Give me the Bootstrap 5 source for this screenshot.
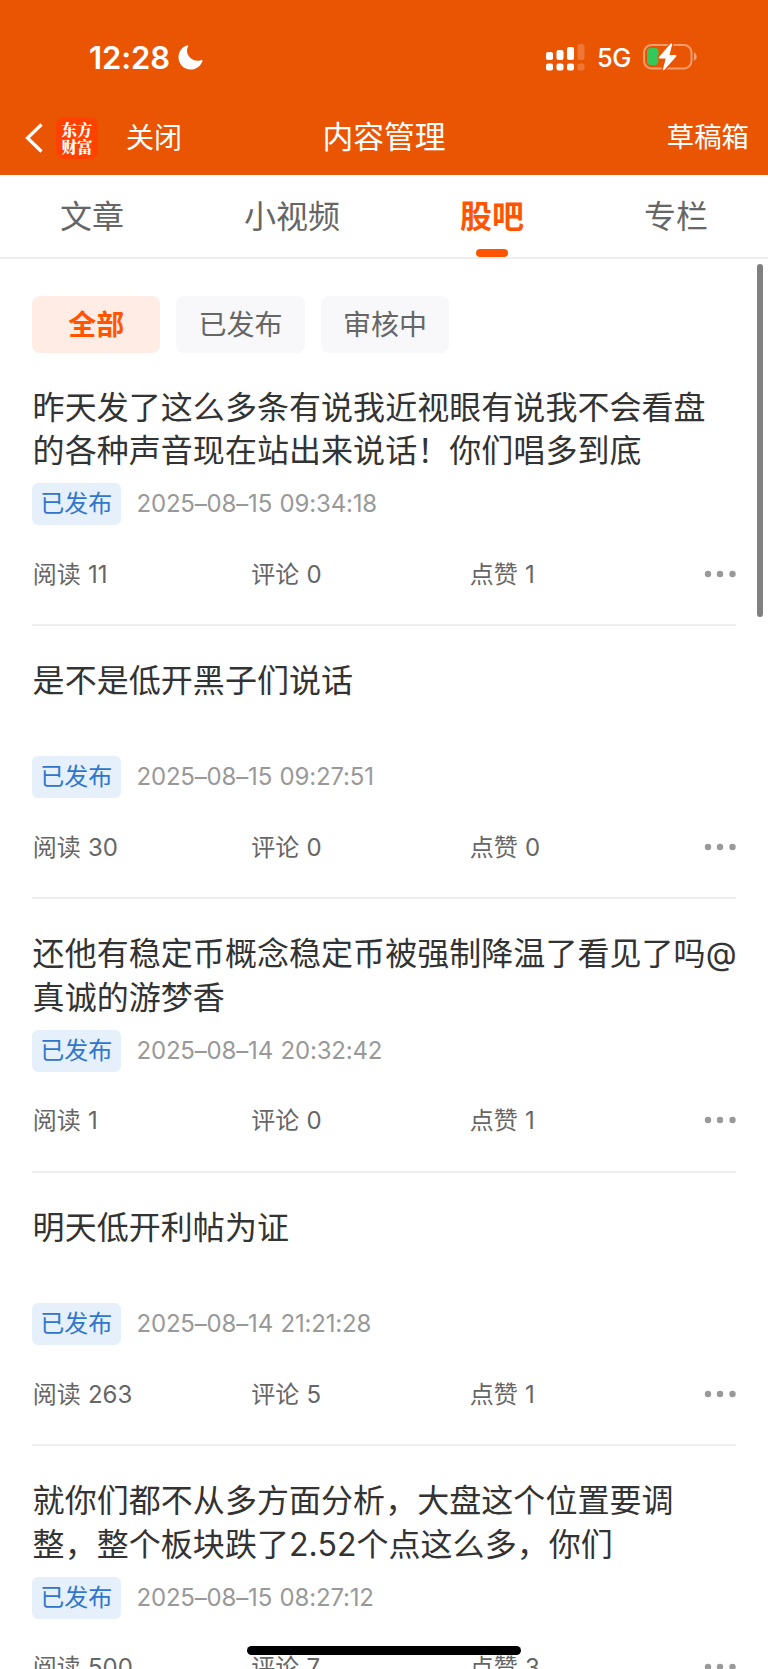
<!DOCTYPE html>
<html lang="zh-CN">
<head>
<meta charset="utf-8">
<meta name="viewport" content="width=device-width, initial-scale=1">
<title>内容管理</title>
<link href="https://cdn.jsdelivr.net/npm/bootstrap@5.3.0/dist/css/bootstrap.min.css" rel="stylesheet">
<style>
  html, body { height: 1669px; overflow: hidden; }
  body { font-family: Inter, "Noto Sans CJK SC", sans-serif; color: #333; background: #fff; }
  .screen { height: 1669px; }
  .app-head { height: 175px; background: #ea5504; color: #fff; }
  .status-bar { height: 100px; padding: 14px 70px 0 89px; }
  .clock { font-size: 31px; font-weight: 600; line-height: 1; letter-spacing: -.1px; }
  .net { font-size: 25.5px; font-weight: 500; line-height: 1; letter-spacing: -.5px; width: 46px; margin-left: 12px; padding-top: 2px; }
  .title-bar { height: 75px; padding: 0 19px 0 25px; font-size: 28px; line-height: 1; }
  .title-bar .page-title { font-size: 30.8px; top: 22px; }
  .title-bar .drafts { font-size: 27.4px; }
  .logo { width: 42px; height: 42px; border-radius: 8px; background: #ff4200; font: 900 15.5px/17px "Noto Serif CJK SC", "Noto Sans CJK SC", sans-serif; margin: 0 28px 0 13px; }
  .tabs { height: 84px; border-bottom: 2px solid #eee; font-size: 32px; color: #666; line-height: 83px; }
  .tabs a, .chip { color: inherit; text-decoration: none; }
  .tabs a.active { height: 83px; color: #ff5500; font-weight: 700; }
  .tabs a.active::after { content: ""; position: absolute; left: 50%; bottom: 1px; width: 32px; height: 8px; margin-left: -16px; border-radius: 4px; background: #ff5500; }
  .chips { gap: 16px; padding: 37px 32px 0; }
  .chip { width: 128.4px; height: 56.7px; border-radius: 8px; background: #f8f8fb; color: #666; font-size: 28px; line-height: 58px; text-align: center; }
  .chip.active { background: #ffece4; color: #ff5500; font-weight: 700; }
  .post { margin: 0 32px; height: 273.4px; padding-top: 33px; border-bottom: 2px solid #eee; }
  .post-title { height: 87.4px; font-size: 32px; line-height: 43.7px; font-weight: 400; letter-spacing: .05px; margin: 0 -4px 10px 0; padding-left: .6px; white-space: nowrap; }
  .state { width: 88.5px; height: 42px; border-radius: 6px; background: #e6f0fb; color: #2f76cc; font-size: 24px; line-height: 42px; text-align: center; }
  .when { font-size: 24px; color: #999; line-height: 42px; margin-left: 16px; letter-spacing: -.18px; word-spacing: 1px; }
  .stats { font-size: 24px; color: #666; line-height: 36px; margin-top: 31.5px; word-spacing: .5px; }
  .stats > span { width: 218.5px; padding-left: .7px; }
  .stats > svg { margin-bottom: 2px; }
  .scroll-thumb { left: 757px; top: 264px; width: 6px; height: 353px; border-radius: 3px; background: #808080; }
  .home-bar { left: 247px; top: 1646px; width: 274px; height: 9px; border-radius: 5px; background: #000; }
</style>
</head>
<body>
<div class="screen position-relative overflow-hidden">
  <header class="app-head">
    <div class="status-bar d-flex align-items-center">
      <span class="clock">12:28</span>
      <svg class="ms-2" width="25" height="25" viewBox="0 0 25 25"><path d="M9.500.300C4.500 1.600.500 6.500.500 12.300.500 19.100 5.800 24.500 12.600 24.500c5.400 0 10.200-3.500 11.900-8.600.2-.7-.3-1-.9-.8C16.500 17.600 9 12.500 9 5.300c0-1.500.4-2.800 1.100-4.100.3-.6.100-1.100-.6-.9z" fill="#fff"/></svg>
      <svg class="ms-auto" width="39" height="28" viewBox="0 0 39 28" fill="#fff">
        <rect x="0" y="9" width="7" height="8" rx="2"/><rect x="10.500" y="7" width="7" height="10" rx="2"/><rect x="21" y="4" width="7" height="13" rx="2"/><rect x="31.500" y="1" width="7" height="16" rx="2" opacity=".2"/>
        <rect x="0" y="20.500" width="7" height="7" rx="2"/><rect x="10.500" y="20.500" width="7" height="7" rx="2"/><rect x="21" y="20.500" width="7" height="7" rx="2"/><rect x="31.500" y="20.500" width="7" height="7" rx="2" opacity=".2"/>
      </svg>
      <span class="net">5G</span>
      <svg class="batt" width="55" height="28" viewBox="0 0 55 28">
        <rect x="1" y="2" width="47.500" height="23.500" rx="7.500" fill="none" stroke="#fff" stroke-opacity=".42" stroke-width="2"/>
        <path d="M51 9.500c3.500 1.200 3.500 7 0 8.200z" fill="#fff" opacity=".45"/>
        <path d="M8 5h4.500c2 0 3 1.300 3 3.200V11c0 1-1 2-1 3.200 0 .9 1 1.300 1 2.300 0 3.700-1 5.500-3.500 5.500H8c-2.600 0-4-1.600-4-4V9c0-2.400 1.400-4 4-4z" fill="#34c759"/>
        <path d="M27.500.800 16 14c-.7.900-.3 1.600.7 1.600h6L20 26c-.4 1.300.7 1.700 1.500.8L33 13.800c.8-.9.400-1.700-.7-1.700h-5.800L29 2C29.400.600 28.300 0 27.500.800z" fill="#fff" stroke="#ea5504" stroke-width="2.500" paint-order="stroke"/>
      </svg>
    </div>
    <div class="title-bar d-flex align-items-center position-relative">
      <svg width="18" height="30" viewBox="0 0 18 30"><path d="M16.500 1.500 2.500 15l14 13.500" fill="none" stroke="#fff" stroke-width="3.200"/></svg>
      <div class="logo d-flex flex-column justify-content-center text-center"><span>东方</span><span>财富</span></div>
      <span>关闭</span>
      <span class="page-title position-absolute start-50 translate-middle-x">内容管理</span>
      <span class="drafts ms-auto">草稿箱</span>
    </div>
  </header>

  <nav class="tabs d-flex justify-content-around">
    <a href="#">文章</a><a href="#">小视频</a><a href="#" class="active position-relative">股吧</a><a href="#">专栏</a>
  </nav>

  <main>
    <div class="chips d-flex">
      <a href="#" class="chip active">全部</a><a href="#" class="chip">已发布</a><a href="#" class="chip">审核中</a>
    </div>

    <article class="post">
      <h2 class="post-title">昨天发了这么多条有说我近视眼有说我不会看盘<br>的各种声音现在站出来说话！你们唱多到底</h2>
      <div class="d-flex"><span class="state">已发布</span><span class="when">2025–08–15 09:34:18</span></div>
      <div class="stats d-flex align-items-center"><span>阅读 11</span><span>评论 0</span><span>点赞 1</span><svg class="ms-auto" width="32" height="8" fill="#999"><circle cx="4" cy="4" r="3.200"/><circle cx="16" cy="4" r="3.200"/><circle cx="28.500" cy="4" r="3.200"/></svg></div>
    </article>
    <article class="post">
      <h2 class="post-title">是不是低开黑子们说话</h2>
      <div class="d-flex"><span class="state">已发布</span><span class="when">2025–08–15 09:27:51</span></div>
      <div class="stats d-flex align-items-center"><span>阅读 30</span><span>评论 0</span><span>点赞 0</span><svg class="ms-auto" width="32" height="8" fill="#999"><circle cx="4" cy="4" r="3.200"/><circle cx="16" cy="4" r="3.200"/><circle cx="28.500" cy="4" r="3.200"/></svg></div>
    </article>
    <article class="post">
      <h2 class="post-title">还他有稳定币概念稳定币被强制降温了看见了吗@<br>真诚的游梦香</h2>
      <div class="d-flex"><span class="state">已发布</span><span class="when">2025–08–14 20:32:42</span></div>
      <div class="stats d-flex align-items-center"><span>阅读 1</span><span>评论 0</span><span>点赞 1</span><svg class="ms-auto" width="32" height="8" fill="#999"><circle cx="4" cy="4" r="3.200"/><circle cx="16" cy="4" r="3.200"/><circle cx="28.500" cy="4" r="3.200"/></svg></div>
    </article>
    <article class="post">
      <h2 class="post-title">明天低开利帖为证</h2>
      <div class="d-flex"><span class="state">已发布</span><span class="when">2025–08–14 21:21:28</span></div>
      <div class="stats d-flex align-items-center"><span>阅读 263</span><span>评论 5</span><span>点赞 1</span><svg class="ms-auto" width="32" height="8" fill="#999"><circle cx="4" cy="4" r="3.200"/><circle cx="16" cy="4" r="3.200"/><circle cx="28.500" cy="4" r="3.200"/></svg></div>
    </article>
    <article class="post">
      <h2 class="post-title">就你们都不从多方面分析，大盘这个位置要调<br>整，整个板块跌了2.52个点这么多，你们</h2>
      <div class="d-flex"><span class="state">已发布</span><span class="when">2025–08–15 08:27:12</span></div>
      <div class="stats d-flex align-items-center"><span>阅读 500</span><span>评论 7</span><span>点赞 3</span><svg class="ms-auto" width="32" height="8" fill="#999"><circle cx="4" cy="4" r="3.200"/><circle cx="16" cy="4" r="3.200"/><circle cx="28.500" cy="4" r="3.200"/></svg></div>
    </article>
  </main>

  <div class="scroll-thumb position-absolute"></div>
  <div class="home-bar position-absolute"></div>
</div>
<script src="https://cdn.jsdelivr.net/npm/bootstrap@5.3.0/dist/js/bootstrap.bundle.min.js"></script>
</body>
</html>
